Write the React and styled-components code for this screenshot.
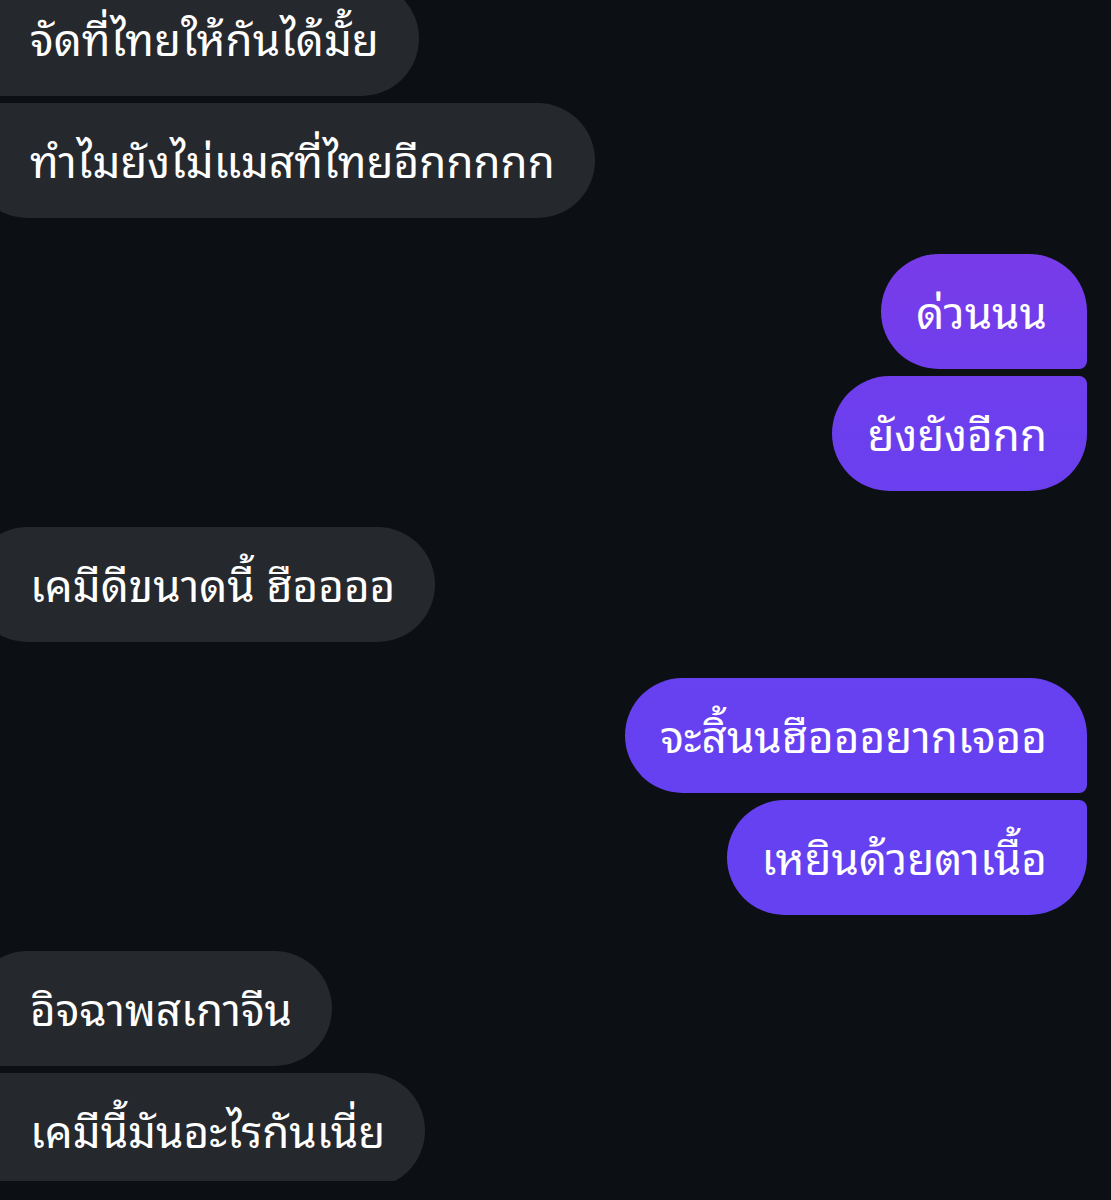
import React from 'react'
import styled, { createGlobalStyle } from 'styled-components'

const GlobalStyle = createGlobalStyle`
  html, body {
    margin: 0;
    padding: 0;
    background: #0c0f14;
  }
  body {
    font-family: "Noto Sans Thai Looped", "Noto Sans", "Liberation Sans", sans-serif;
    overflow: hidden;
  }
`

const Thread = styled.div`
  display: flex;
  flex-direction: column;
  width: 1111px;
  height: 1200px;
  overflow: hidden;
  /* first bubble is cut off by the top of the screen */
  margin-top: -19px;
`

const Group = styled.div`
  display: flex;
  flex-direction: column;
  align-items: ${p => (p.mine ? 'flex-end' : 'flex-start')};
  gap: 7px;
  margin-bottom: 36px;
  padding-right: ${p => (p.mine ? '24px' : '0')};
`

const Bubble = styled.div`
  box-sizing: border-box;
  height: 115px;
  display: flex;
  align-items: center;
  color: #ffffff;
  font-size: 44px;
  font-weight: 400;
  line-height: 1;
  white-space: nowrap;
  padding: 0 40px 6px ${p => (p.mine ? '35px' : '60px')};
  margin-left: ${p => (p.mine ? '0' : '-30px')};
  background: ${p =>
    p.mine
      ? 'linear-gradient(180deg, #8a36e2 0px, #6c3fee 430px, #6541f1 800px, #6441f1 1200px) fixed'
      : '#25282c'};
  border-radius: ${p => p.radius};
`

const big = '58px'
const small = '8px'

function cornerFor(mine, i, n) {
  const first = i === 0
  const last = i === n - 1
  if (mine) {
    const tr = first ? big : small
    const br = last ? big : small
    return `${big} ${tr} ${br} ${big}`
  }
  const tl = first ? big : small
  const bl = last ? big : small
  return `${tl} ${big} ${big} ${bl}`
}

const groups = [
  { mine: false, texts: ['จัดที่ไทยให้กันได้มั้ย', 'ทำไมยังไม่แมสที่ไทยอีกกกกก'] },
  { mine: true, texts: ['ด่วนนน', 'ยังยังอีกก'] },
  { mine: false, texts: ['เคมีดีขนาดนี้ ฮืออออ'] },
  { mine: true, texts: ['จะสิ้นนฮือออยากเจออ', 'เหยินด้วยตาเนื้อ'] },
  { mine: false, texts: ['อิจฉาพสเกาจีน', 'เคมีนี้มันอะไรกันเนี่ย'] },
]

export default function App() {
  return (
    <>
      <GlobalStyle />
      <Thread>
        {groups.map((g, gi) => (
          <Group key={gi} mine={g.mine}>
            {g.texts.map((t, i) => (
              <Bubble key={i} mine={g.mine} radius={cornerFor(g.mine, i, g.texts.length)}>
                {t}
              </Bubble>
            ))}
          </Group>
        ))}
      </Thread>
    </>
  )
}
